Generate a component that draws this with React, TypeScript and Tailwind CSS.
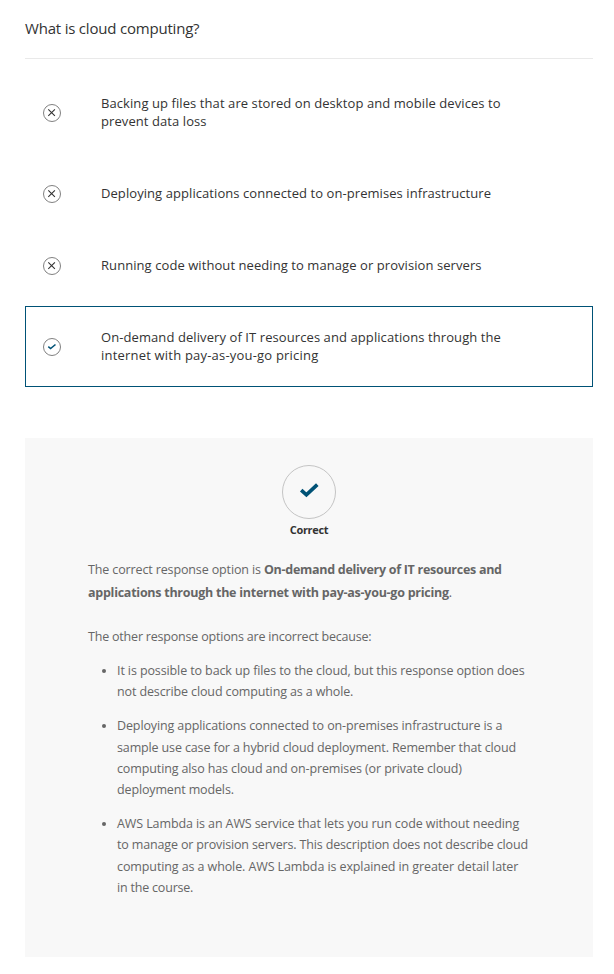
type TextLine = { text: string; tracking: string };

const options: { lines: TextLine[]; correct: boolean }[] = [
  {
    lines: [
      { text: 'Backing up files that are stored on desktop and mobile devices to', tracking: 'tracking-[0.08px]' },
      { text: 'prevent data loss', tracking: 'tracking-[0.08px]' },
    ],
    correct: false,
  },
  { lines: [{ text: 'Deploying applications connected to on-premises infrastructure', tracking: 'tracking-[0.07px]' }], correct: false },
  { lines: [{ text: 'Running code without needing to manage or provision servers', tracking: 'tracking-[0.07px]' }], correct: false },
  {
    lines: [
      { text: 'On-demand delivery of IT resources and applications through the', tracking: 'tracking-[0.085px]' },
      { text: 'internet with pay-as-you-go pricing', tracking: 'tracking-[0.2px]' },
    ],
    correct: true,
  },
];

const reasons: TextLine[][] = [
  [
    { text: 'It is possible to back up files to the cloud, but this response option does', tracking: 'tracking-[-0.11px]' },
    { text: 'not describe cloud computing as a whole.', tracking: 'tracking-[-0.125px]' },
  ],
  [
    { text: 'Deploying applications connected to on-premises infrastructure is a', tracking: 'tracking-[-0.12px]' },
    { text: 'sample use case for a hybrid cloud deployment. Remember that cloud', tracking: 'tracking-[-0.136px]' },
    { text: 'computing also has cloud and on-premises (or private cloud)', tracking: 'tracking-[-0.12px]' },
    { text: 'deployment models.', tracking: 'tracking-[-0.14px]' },
  ],
  [
    { text: 'AWS Lambda is an AWS service that lets you run code without needing', tracking: 'tracking-[-0.1px]' },
    { text: 'to manage or provision servers. This description does not describe cloud', tracking: 'tracking-[-0.153px]' },
    { text: 'computing as a whole. AWS Lambda is explained in greater detail later', tracking: 'tracking-[-0.1px]' },
    { text: 'in the course.', tracking: 'tracking-[-0.2px]' },
  ],
];

function Lines({ lines }: { lines: TextLine[] }) {
  return lines.map((line) => (
    <span key={line.text} className={`block whitespace-nowrap ${line.tracking}`}>
      {line.text}
    </span>
  ));
}

function Status({ correct }: { correct: boolean }) {
  return (
    <svg width="18" height="18" viewBox="0 0 18 18" fill="none" className="shrink-0">
      <circle cx="9" cy="9" r="8.5" stroke="#808080" />
      {correct ? (
        <path d="m5.3 8.6 2.3 1.9 4.9-4" stroke="#005276" strokeWidth="1.6" />
      ) : (
        <path d="m5.3 5.3 6.6 6.6m0-6.6-6.6 6.6" stroke="#333" strokeWidth="1.1" />
      )}
    </svg>
  );
}

export default function App() {
  return (
    <main className="h-[974px] w-[614px] bg-white pl-[25px] pt-[17px] font-['Open_Sans',sans-serif] text-[#333]">
      <h1 className="h-[41px] text-[15px] leading-[22px] tracking-[-0.2px]">What is cloud computing?</h1>
      <div className="w-[568px] border-t border-[#e9e9e9]" />
      <ul className="mt-[13px] flex w-[568px] flex-col gap-[9px]">
        {options.map((option) => (
          <li
            key={option.lines[0].text}
            className={`flex items-center gap-10 border pl-[17px] text-[13px] leading-[18px] ${
              option.lines.length > 1 ? 'h-[81px]' : 'h-[63px]'
            } ${option.correct ? 'border-[#005276]' : 'border-transparent'}`}
          >
            <Status correct={option.correct} />
            <p className="pb-px">
              <Lines lines={option.lines} />
            </p>
          </li>
        ))}
      </ul>
      <section className="mt-[51px] h-[519px] w-[568px] bg-[#f8f8f8] pt-[27px]">
        <div className="flex flex-col items-center">
          <svg width="54" height="54" viewBox="0 0 54 54" fill="none">
            <circle cx="27" cy="27" r="26.5" stroke="#c4c4c4" />
            <path d="m19.2 25.2 5.2 4.6 10.9-10.2" stroke="#005276" strokeWidth="3.7" />
          </svg>
          <strong className="mt-[3px] text-[11px] font-bold leading-4 tracking-[-0.35px]">Correct</strong>
        </div>
        <div className="ml-[63px] mt-5 text-[12.5px] text-[#666]">
          <p className="whitespace-nowrap leading-[23px]">
            <span className="tracking-[-0.13px]">The correct response option is </span>
            <b className="tracking-[-0.28px]">On-demand delivery of IT resources and</b>
            <br />
            <b className="tracking-[-0.26px]">applications through the internet with pay-as-you-go pricing</b>.
          </p>
          <p className="mt-[21px] leading-[23px] tracking-[-0.2px]">The other response options are incorrect because:</p>
          <ul className="ml-[29px] mt-3 flex flex-col gap-[12.75px] leading-[21.25px]">
            {reasons.map((lines) => (
              <li key={lines[0].text} className="flex">
                <span className="-ml-[15px] mr-[11px] mt-[9px] size-1 shrink-0 rounded-full bg-[#666]" />
                <p>
                  <Lines lines={lines} />
                </p>
              </li>
            ))}
          </ul>
        </div>
      </section>
    </main>
  );
}
